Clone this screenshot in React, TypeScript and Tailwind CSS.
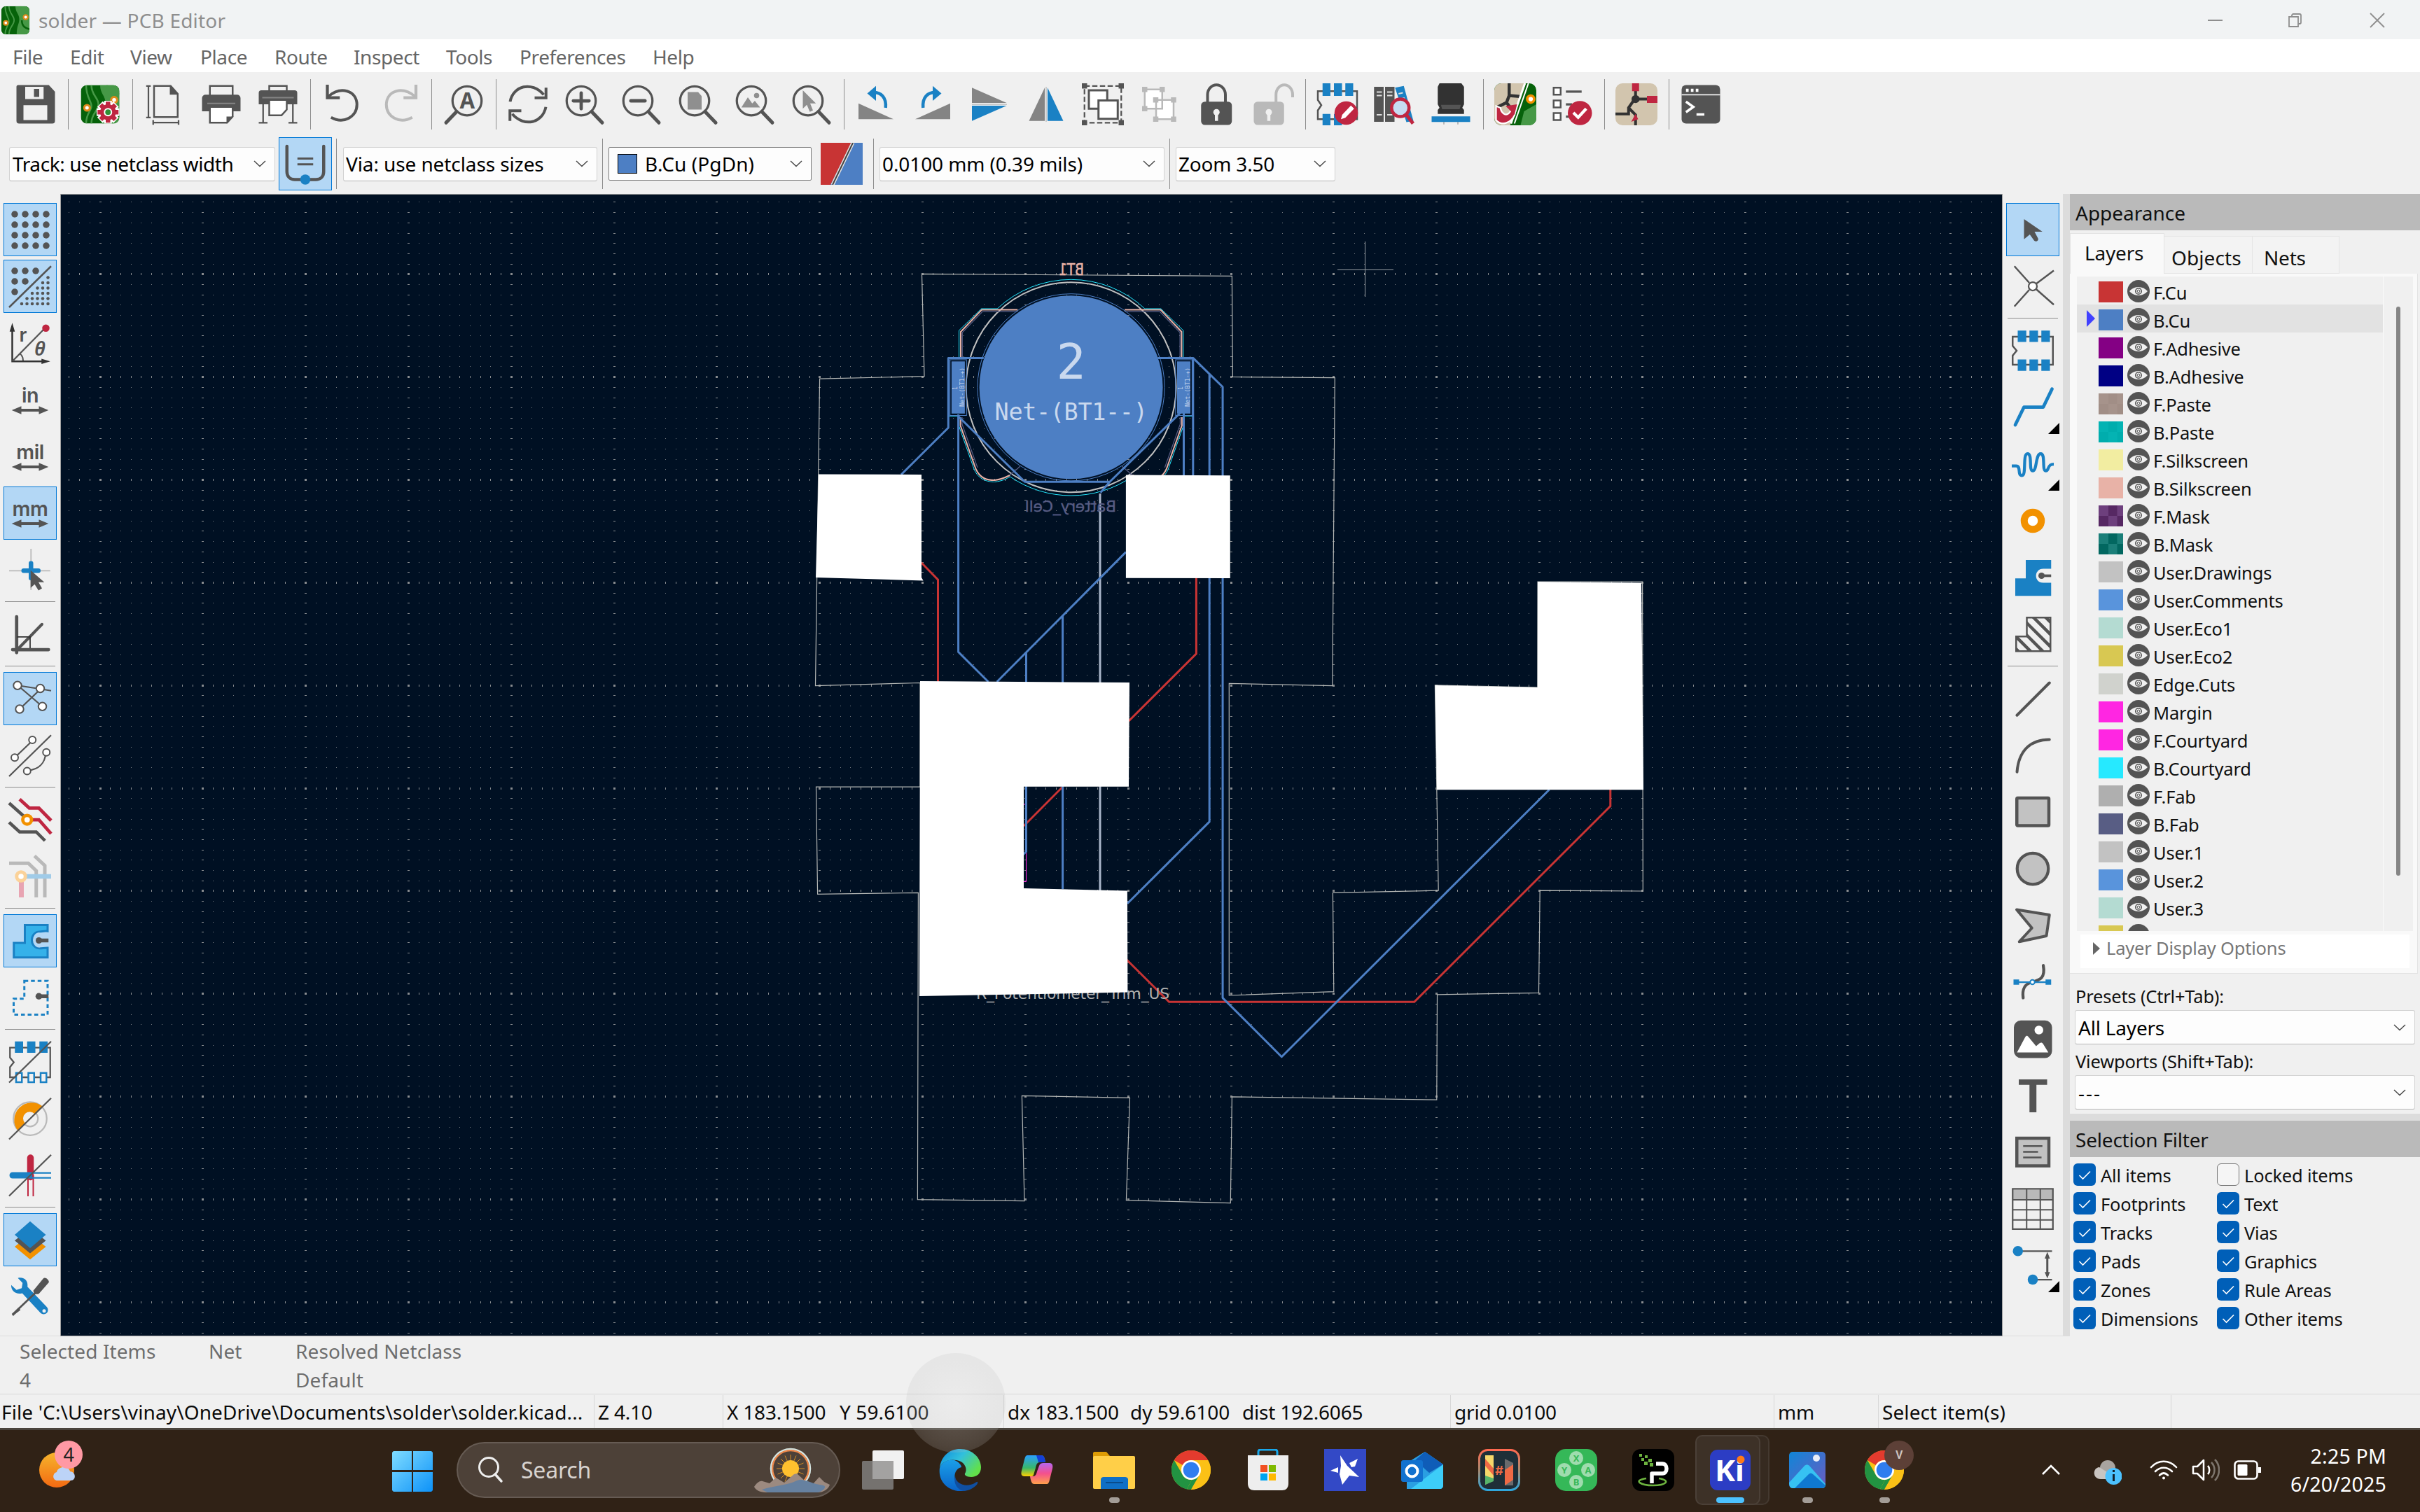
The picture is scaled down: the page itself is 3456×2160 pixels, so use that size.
import React from "react";

type IconProps = { children: React.ReactNode; className?: string };

const Svg = ({ children, className = "size-[60px]" }: IconProps) => (
  <svg viewBox="0 0 24 24" className={`${className} shrink-0 overflow-visible`} fill="none">
    {children}
  </svg>
);

const DK = "#545454";
const BL = "#1a81c4";
const RD = "#bf2641";
const GR = "#848484";
const LT = "#b9b9b9";
const OR = "#f29100";

/* ---------- shared drawings ---------- */

const PcbTile = () => (
  <>
    <clipPath id="tile">
      <rect x="1" y="1" width="22" height="22" rx="3.5" />
    </clipPath>
    <g clipPath="url(#tile)">
      <rect x="1" y="1" width="22" height="22" fill="#06620a" />
      <path d="M12 1c0 5 3 6 3 10s-2 5-2 12h10V1z" fill="#469846" />
      <path d="M7 1c0 6 4 7 4 11s-4 5-4 11M4 1c0 7 3 9 3 12s-3 4-3 10M16 1c0 4 4 5 7 5" stroke="#469846" strokeWidth="1" />
      <path d="M17 12c0 5 3 6 6 7" stroke="#06620a" strokeWidth="1.4" />
      <circle cx="4.500" cy="14" r="1.600" fill="#fff" stroke="#e08a1a" strokeWidth="1.200" />
      <circle cx="20" cy="9.500" r="1.700" fill="#fff" stroke="#e08a1a" strokeWidth="1.200" />
    </g>
  </>
);

const Lens = ({ children }: { children?: React.ReactNode }) => (
  <Svg>
    <circle cx="10" cy="10" r="8.300" stroke={DK} strokeWidth="1.300" />
    <path d="M16 16.200 22 22.500" stroke={DK} strokeWidth="2" strokeLinecap="round" />
    {children}
  </Svg>
);

const Footprint = () => (
  <>
    <path d="M.5 4h23v16H.5v-5.200l2.300-2.800L.5 9.200z" stroke={DK} strokeWidth="1" />
    {[3.4, 10.100, 16.900].map((x) => (
      <g key={x}>
        <rect x={x} y=".5" width="4.900" height="6.500" fill={BL} />
        <rect x={x} y="17" width="4.900" height="6.500" fill={BL} />
      </g>
    ))}
  </>
);

const Arrows = () => <path d="M1.500 18 7 15.700v1.500h10v-1.500L22.500 18 17 20.300v-1.500H7v1.500z" fill={DK} />;

const UnitText = ({ children }: { children: string }) => (
  <text x="12" y="13.400" textAnchor="middle" fontSize="11.500" fontWeight="600" fontFamily="Inter, sans-serif" fill={DK}>
    {children}
  </text>
);

/* ---------- top toolbar ---------- */

const save = (
  <Svg>
    <path d="M2 1h17.500L23 4.800V21.500A1.500 1.500 0 0 1 21.500 23H2.500A1.500 1.500 0 0 1 1 21.500V2a1 1 0 0 1 1-1z" fill={DK} />
    <path d="M6 2h10.500v7H6zM5 12.500h13.600V21H5z" fill="#f0f0f0" />
    <path d="M11 3.200h3v4.600h-3z" fill={DK} />
  </Svg>
);
const pcbSetup = (
  <Svg>
    <PcbTile />
    <g transform="translate(16.500 16.500)">
      <g stroke="#fff" strokeWidth="4.400">
        <path d="M0-6.500V6.500M-6.500 0H6.500M-4.600-4.600 4.600 4.600M-4.600 4.600 4.600-4.600" />
      </g>
      <circle r="5.400" fill="#fff" />
      <g stroke={RD} strokeWidth="2.600">
        <path d="M0-6V6M-6 0H6M-4.200-4.200 4.200 4.200M-4.200 4.200 4.200-4.200" />
      </g>
      <circle r="4.500" fill={RD} />
      <circle r="2" fill="#2f8f35" stroke="#fff" strokeWidth=".8" />
    </g>
  </Svg>
);
const pageIc = (
  <Svg>
    <path d="M6 1.500h9.500L19.500 6v13.300H6z" stroke={DK} />
    <path d="M15 1l5 5.500h-5z" fill={DK} />
    <path d="M2.800 1.500v18M1.500 1.500h2.600M1.500 19.500h2.600M5.500 22.400h14.500M5.500 21v2.700M20 21v2.700" stroke={DK} strokeWidth=".9" />
  </Svg>
);
const printIc = (
  <Svg>
    <path d="M5.500 8V1.500h13V8" stroke={DK} />
    <path d="M3 6.500h18a2 2 0 0 1 2 2V16H1V8.500a2 2 0 0 1 2-2z" fill={DK} />
    <path d="M4 11.500h16" stroke={GR} strokeWidth=".8" />
    <path d="M5.500 13.500h13V19l-3.200 3.500H5.500z" fill="#fff" stroke={DK} />
    <path d="M15 23v-4h4z" fill={DK} />
  </Svg>
);
const plotIc = (
  <Svg>
    <path d="M7 6V1.500h10V6" stroke={DK} />
    <path d="M2.500 4h19A1.500 1.500 0 0 1 23 5.500V12H1V5.500A1.500 1.500 0 0 1 2.500 4z" fill={DK} />
    <path d="M3 8.200h18" stroke={GR} strokeWidth=".8" />
    <path d="M7 9.500h10V15l-3 3.300H7z" fill="#fff" stroke={DK} />
    <path d="M3.500 12v10.500M20.500 12v10.500M1 22.500h5M18 22.500h5" stroke={DK} strokeWidth=".9" />
  </Svg>
);
const undoPath = "M4 7.500C11 1.500 20 4 20.300 12 20.300 19 13 23.500 5.500 19.500";
const undo = (
  <Svg>
    <path d={undoPath} stroke={DK} strokeWidth="1.600" />
    <path d="M3.400.800v7.400H10.500" stroke={DK} strokeWidth="1.700" />
  </Svg>
);
const redo = (
  <Svg>
    <g transform="matrix(-1 0 0 1 25 0)">
      <path d={undoPath} stroke={LT} strokeWidth="1.600" />
      <path d="M3.400.800v7.400H10.500" stroke={LT} strokeWidth="1.700" />
    </g>
  </Svg>
);
const find = (
  <Svg>
    <circle cx="14" cy="10" r="8.300" stroke={DK} strokeWidth="1.300" />
    <path d="M8 16.200 2 22.500" stroke={DK} strokeWidth="2" strokeLinecap="round" />
    <text x="14" y="14.300" textAnchor="middle" fontSize="12.500" fontWeight="700" fontFamily="Noto Sans, sans-serif" fill={DK}>A</text>
  </Svg>
);
const refresh = (
  <Svg>
    <path d="M1.800 10.500C3.500 1.500 14-1.500 21 6.500M22.200 13.500C20.500 22.500 10 25.500 3 17.500" stroke={DK} strokeWidth="1.600" />
    <path d="M22.300 2.500v5.800h-6.500M1.700 21.500v-5.800h6.500" stroke={DK} strokeWidth="1.600" />
  </Svg>
);
const zoomIn = <Lens><path d="M10 5.500v9M5.500 10h9" stroke={DK} strokeWidth="1.900" strokeLinecap="round" /></Lens>;
const zoomOut = <Lens><path d="M6 10h8" stroke={DK} strokeWidth="2" strokeLinecap="round" /></Lens>;
const zoomFit = <Lens><path d="M6 5h6l2 2.300V15H6z" fill="#8f8f8f" /></Lens>;
const zoomObj = (
  <Lens>
    <path d="M4.300 13.800 8 8l2.500 3.500L12 10l3 3.800z" fill="#8f8f8f" />
    <circle cx="13" cy="7" r="1.500" fill="#8f8f8f" />
  </Lens>
);
const zoomSel = <Lens><path d="M7 4v10.500l2.300-2.200 1.700 4 1.800-.8-1.600-4h3.300z" fill="#8f8f8f" /></Lens>;
const rotL = (
  <Svg>
    <path d="M2 12v9h20z" fill={GR} transform="translate(0 -.500)" />
    <path d="M17.500 14C18 8 15 5 10 5.200" stroke={BL} strokeWidth="1.800" />
    <path d="M12 1.500 7 5.800l5 4.200z" fill={BL} />
  </Svg>
);
const rotR = (
  <Svg>
    <path d="M22 12v9H2z" fill={GR} transform="translate(0 -.500)" />
    <path d="M6.500 14C6 8 9 5 14 5.200" stroke={BL} strokeWidth="1.800" />
    <path d="M12 1.500l5 4.300L12 10z" fill={BL} />
  </Svg>
);
const flipV = (
  <Svg>
    <path d="M2 2.500v8.700h19.800z" fill={GR} />
    <path d="M2 21.500v-8.700h19.800z" fill={BL} />
    <path d="M2 12h20" stroke={LT} strokeWidth=".5" />
  </Svg>
);
const flipH = (
  <Svg>
    <path d="M2.200 21.500h9v-19z" fill={GR} />
    <path d="M21.800 21.500h-9v-19z" fill={BL} />
    <path d="M12 2v20" stroke={LT} strokeWidth=".5" />
  </Svg>
);
const group = (
  <Svg>
    <path d="M1.500 1.500h21v21h-21z" stroke={DK} strokeWidth=".9" strokeDasharray="3 1.400" />
    <path d="M0 0h3v3H0zM21 0h3v3h-3zM0 21h3v3H0zM21 21h3v3h-3z" fill={DK} />
    <path d="M4 4h10.500v10.500H4z" fill="#fff" stroke={DK} strokeWidth="1.200" />
    <path d="M9.500 9.800h11v10.500h-11z" fill="#fff" stroke={DK} strokeWidth="1.200" />
  </Svg>
);
const ungroup = (
  <Svg>
    <path d="M3.500 3.500h10v11h-10zM10 9.500h10v11H10z" fill="#fff" stroke={LT} />
    <path d="M2 2h3v3H2zM12 2h3v3h-3zM2 13h3v3H2zM8.300 8h3v3h-3zM18.500 8h3v3h-3zM8.300 19h3v3h-3zM18.500 19h3v3h-3z" fill={LT} />
  </Svg>
);
const lock = (
  <Svg>
    <path d="M7 11V6.500a5 5.500 0 0 1 10.200 0V11" stroke={DK} strokeWidth="1.600" />
    <rect x="3.300" y="10.500" width="17.600" height="13.300" rx="2.200" fill={DK} />
    <circle cx="12.100" cy="16.500" r="1.800" fill="#f0f0f0" />
    <path d="M11.200 16.500h1.800v5h-1.800z" fill="#f0f0f0" />
  </Svg>
);
const unlock = (
  <Svg>
    <path d="M13.700 11V6.500a4.700 5.500 0 0 1 9.500 0V8" stroke={LT} strokeWidth="1.600" />
    <rect x="1" y="10.500" width="17.300" height="13.300" rx="2.200" fill={LT} />
    <circle cx="9.600" cy="16.500" r="1.800" fill="#f0f0f0" />
    <path d="M8.700 16.500h1.800v5H8.700z" fill="#f0f0f0" />
  </Svg>
);
const fpEdit = (
  <Svg>
    <path d="M.8 4.500h22.400v16H.8v-5l2-3-2-3z" stroke={DK} />
    <path d="M3.500 0H8v7.200H3.500zM10 0h4.600v7.200H10zM16.500 0H21v7.200h-4.500zM3.500 17.500H8V24H3.500zM10 17.500h4.600V24H10z" fill={BL} />
    <circle cx="17" cy="17" r="6.700" fill={RD} />
    <path d="m14 20.500.7-2.500 5-5.300 1.800 1.800-5 5.200z" fill="#fff" />
  </Svg>
);
const fpLib = (
  <Svg>
    <path d="M.5 2H6v20H.5zM6.800 2h5.400v20H6.800z" fill={DK} />
    <path d="M2 5h3M2 7h3M8 5h3M8 7h3M2 18h3M8 18h3" stroke="#ddd" strokeWidth=".8" />
    <path d="m12.500 2.500 5-1L23 21.500l-4 .7z" fill={BL} />
    <path d="m14.500 6 2.500-.6M15.500 9l2.500-.6" stroke="#ddd" strokeWidth=".8" />
    <circle cx="15.500" cy="14" r="5" fill="#c7dcf2" stroke={RD} strokeWidth="1.800" />
    <path d="m19 18 3.800 5" stroke={RD} strokeWidth="2" />
  </Svg>
);
const view3d = (
  <Svg>
    <path d="M8 20v3.500M16 20v3.500" stroke={LT} strokeWidth=".8" />
    <path d="M5.500 0h12.500L19.500 2v10l-1 2 1 1.200V17.500H4.500v-2.300L5.500 14l-1-2V2z" fill="#323232" />
    <path d="M6.300 12.300h11.400l-.7 2.500H7z" fill={DK} />
    <path d="M1 18.900h22v3.200H1z" fill={BL} />
  </Svg>
);
const updateSch = (
  <Svg>
    <clipPath id="half">
      <rect x="0" y="0" width="24" height="24" rx="4" />
    </clipPath>
    <g clipPath="url(#half)">
      <rect width="24" height="24" fill="#06620a" />
      <path d="M0 0h18L9 24H0z" fill="#d2c5ae" />
      <path d="M8.500 0v7l-1.500 4M8.500 7l6 .5M7 11l-6 3M7 11l3 4" stroke="#323232" strokeWidth="1.800" />
      <path d="M24 12 17 16l-2 8h9z" fill="#469846" />
      <circle cx="20.800" cy="9" r="2" fill="#fff" stroke={OR} strokeWidth="1.500" />
      <path d="M17.500 0 9.500 23" stroke="#fff" strokeWidth="1.200" />
      <path d="M19.500 0 11.500 23" stroke="#fff" strokeWidth=".8" />
    </g>
    <path d="M1 13v8c3 3.500 8 2 10.500-2.500l1.500-6-3.500 3C7 20 4 17 3.500 14z" fill={RD} stroke="#fff" strokeWidth=".9" />
    <path d="m13 12-6.500 1 5 5z" fill={RD} />
  </Svg>
);
const drc = (
  <Svg>
    <path d="M1.500 2.500h4v4h-4zM1.500 9.800h4v4h-4zM1.500 17h4v4h-4z" stroke={DK} fill="#fff" />
    <path d="M8.500 4.700h9M8.500 12H12M8.500 19h2" stroke={DK} strokeWidth="1.300" />
    <circle cx="16.500" cy="17" r="6.900" fill={RD} />
    <path d="m12.800 16.800 2.700 2.700 4.600-5" stroke="#fff" strokeWidth="1.700" />
  </Svg>
);
const schematic = (
  <Svg>
    <rect x="0" y="0" width="24" height="24" rx="4" fill="#d2c5ae" />
    <path d="M11.500 1v8M11 9h8M11 9l-3.500 5v3.500H0M7.500 14l4 4v6" stroke="#323232" strokeWidth="1.600" />
    <circle cx="11.500" cy="9" r="2.300" fill="#323232" />
    <path d="M9.500 0h4v4.500h-4zM18 7.200h6v4h-6z" fill={RD} />
    <path d="m9 22 4-1.500-1.500-3z" fill={RD} />
  </Svg>
);
const consoleIc = (
  <Svg>
    <rect x="1" y="1" width="22" height="22" rx="2.500" fill={DK} />
    <path d="M1 6.500h22" stroke="#f0f0f0" strokeWidth=".7" />
    <path d="M3.500 4h1.500M6.300 4h1.500M9.100 4h1.500" stroke="#fff" strokeWidth="1.800" />
    <path d="m3.500 10.500 4.200 3-4.200 3M9.500 17.800h4.500" stroke="#fff" strokeWidth="1.400" />
  </Svg>
);

const topTools: (React.ReactNode | "|")[] = [
  save, "|", pcbSetup, "|", pageIc, printIc, plotIc, "|", undo, redo, "|", find, "|",
  refresh, zoomIn, zoomOut, zoomFit, zoomObj, zoomSel, "|",
  rotL, rotR, flipV, flipH, group, ungroup, lock, unlock, "|", fpEdit, fpLib, view3d, "|",
  updateSch, drc, "|", schematic, "|", consoleIc,
];

/* ---------- left toolbar ---------- */

const dots = (list: [number, number][], r: number) =>
  list.map(([x, y]) => <circle key={`${x}-${y}`} cx={x} cy={y} r={r} fill={DK} />);

const grid4: [number, number][] = [3.200, 9.200, 15.200, 21.200].flatMap((y) =>
  [3.200, 9.200, 15.200, 21.200].map((x) => [x, y] as [number, number]));
const gridIc = <Svg>{dots(grid4, 1.900)}</Svg>;
const gridOver = (
  <Svg>
    {dots([[3.200, 3.200], [9.200, 3.200], [15.200, 3.200], [3.200, 9.200], [9.200, 9.200], [3.200, 15.200]], 1.900)}
    {dots(
      [7, 10, 13, 16, 19, 22].flatMap((x, i) =>
        [22, 19, 16, 13, 10, 7].slice(0, i + 1).map((y) => [x + 0.200, y] as [number, number])),
      0.900)}
    <path d="M0 24 24 .5" stroke={DK} strokeWidth="1" />
  </Svg>
);
const polar = (
  <Svg>
    <path d="M1.800 4v18.500H20" stroke="#323232" strokeWidth="1" />
    <path d="m.3 5.500 1.500-5 1.500 5zM18.500 21l5 1.500-5 1.500z" fill="#323232" />
    <path d="M2 22.300 20 4" stroke={DK} strokeWidth=".9" />
    <path d="M6 18c1.500 1 2 2.500 2 4" stroke={DK} strokeWidth=".8" />
    <circle cx="21" cy="3.500" r="2.100" fill={RD} />
    <text x="5.800" y="11" fontSize="11" fontWeight="600" fontFamily="Inter, sans-serif" fill={DK}>r</text>
    <text x="14.500" y="19.200" fontSize="11" fontStyle="italic" fontWeight="600" fontFamily="Noto Sans, sans-serif" fill={DK}>θ</text>
  </Svg>
);
const unit = (t: string) => (
  <Svg>
    <UnitText>{t}</UnitText>
    <Arrows />
  </Svg>
);
const cursorIc = (
  <Svg>
    <path d="M12.500 0v23.500M0 12.500h23.500" stroke={LT} strokeWidth=".7" />
    <path d="M12.500 8.300v8.400M8.300 12.500h8.400" stroke={BL} strokeWidth="2.600" strokeLinecap="round" />
    <path d="M12.300 12.300v10l2.300-2 2.200 3.500 2-1.200-2-3.500h3.300z" fill={DK} />
  </Svg>
);
const angle = (
  <Svg>
    <path d="M4.300 2v20.500M2 20.800h20.500" stroke={DK} strokeWidth="1.900" strokeLinecap="round" />
    <path d="M5 20.500 18.800 6.300" stroke={DK} strokeWidth="1.600" strokeLinecap="round" />
    <path d="M4.500 13.500h7.500V20" stroke="#323232" strokeWidth=".7" />
  </Svg>
);
const ratsnest = (
  <Svg>
    <path d="M5 4.500 18 6.500 24 7.500M5 4.500l14 12M18 6.500 6 18" stroke={DK} strokeWidth=".9" />
    {[[4.800, 4.500], [17.800, 6.200], [6, 18], [19, 16.500]].map(([x, y]) => (
      <circle key={x} cx={x} cy={y} r="2.300" fill="#fff" stroke={DK} strokeWidth=".8" />
    ))}
  </Svg>
);
const curved = (
  <Svg>
    <path d="M3 13.500 13.500 3.500M0 24 24 .5M10.500 20.800C18 20 20.500 16 21 10.500" stroke={DK} strokeWidth=".9" />
    {[[3.200, 13.300], [13.300, 3.200], [21.300, 10.300], [10.300, 21]].map(([x, y]) => (
      <circle key={x} cx={x} cy={y} r="2" fill="#fff" stroke={DK} strokeWidth=".8" />
    ))}
  </Svg>
);
const netHi = (
  <Svg>
    <path d="M6 .3 11.500 5.300H17L24 12.500M10 12h7L24 20" stroke={RD} strokeWidth="1.900" />
    <path d="M0 2.500 9.500 11M0 13.500l6 5.500h9.500l5 5" stroke={DK} strokeWidth="1.800" />
    <circle cx="10.300" cy="12" r="2.500" fill="#fff" stroke={OR} strokeWidth="1.900" />
  </Svg>
);
const contrast = (
  <Svg>
    <path d="M0 4.500h11l4.500 4.300V24M14.500.300l5.900 5.500V24" stroke={LT} strokeWidth="2" />
    <path d="M7 13v11" stroke="#e8a4b2" strokeWidth="2.800" />
    <path d="M8 12h16" stroke="#a0cbe8" strokeWidth="2.600" />
    <circle cx="6.800" cy="12" r="2.500" fill="#fff" stroke="#fbd299" strokeWidth="2" />
  </Svg>
);
const zoneFill = (
  <Svg>
    <path d="M9 3h13v3.500c-2-.3-3 .3-4.500.3-6 0-6 9.500 0 9.500 1.500 0 2.500-.3 4.500-.3V21.500H2.700v-8.300H9z" fill="#35b1e9" stroke={BL} strokeWidth="1.200" />
    <path d="M17 7.300c-4 0-4 8.500 0 8.500 1.500 0 2-1 2.500-2.300H24V10h-4.500C19 8.500 18.500 7.300 17 7.300z" fill="#b3d7f5" />
    <path d="M17 11.800h5.500" stroke={DK} strokeWidth="2.200" />
    <circle cx="17" cy="11.800" r="1.800" fill={DK} />
  </Svg>
);
const zoneOut = (
  <Svg>
    <path d="M8.700 2.500H22v19.300H2.600v-9.100h6.100z" stroke={BL} strokeWidth="1.200" strokeDasharray="2.200 1.600" />
    <path d="M17 11.300h5.500" stroke={DK} strokeWidth="2.200" />
    <circle cx="17" cy="11.300" r="1.900" fill={DK} />
  </Svg>
);
const padsIc = (
  <Svg>
    <path d="M.5 3.800h23v17H.5V15l2.200-2.800L.5 9.500z" stroke={DK} strokeWidth=".9" />
    <path d="M3.300.300H8v6.500H3.300zM10.300.300H15v6.500h-4.700zM17.300.300H22v6.500h-4.700z" fill={BL} />
    <path d="M4 18.300h3.300v5.300H4zM11 18.300h3.300v5.300H11zM18 18.300h3.300v5.300H18z" fill="#f0f0f0" stroke={BL} />
    <path d="M0 23.800 24 .300" stroke={DK} strokeWidth=".9" />
  </Svg>
);
const viasIc = (
  <Svg>
    <circle cx="12" cy="12" r="9.500" stroke={LT} strokeWidth=".9" />
    <circle cx="12" cy="12" r="4.500" stroke={LT} strokeWidth=".9" />
    <path d="M5.300 18.500A9.500 9.500 0 0 1 18.700 5.300L15 9a4.200 4.200 0 0 0-6.400 5.800z" fill={OR} stroke={OR} />
    <path d="M0 23.800 24 .300" stroke={DK} strokeWidth=".9" />
  </Svg>
);
const tracksIc = (
  <Svg>
    <path d="M10.800 12v12M13.800 12v12" stroke={RD} strokeWidth=".8" />
    <path d="M12.200 2v11" stroke={RD} strokeWidth="3.800" strokeLinecap="round" />
    <path d="M12 10.600h12M12 13.400h12" stroke={BL} strokeWidth=".9" />
    <path d="M2 12h9.500" stroke={BL} strokeWidth="3.600" strokeLinecap="round" />
    <path d="M0 23.800 24 .300" stroke={DK} strokeWidth=".9" />
  </Svg>
);
const layersIc = (
  <Svg>
    <path d="m12 9 9 7-9 7.300L3.200 16z" fill={OR} />
    <path d="m12 5.500 9 7-9 7.300-8.800-7.300z" fill={DK} />
    <path d="m12 1.500 9 7.700-9 7.600-8.800-7.600z" fill={BL} />
  </Svg>
);
const toolsIc = (
  <Svg>
    <path d="M5 1.500c3.500-.8 6 1.500 5.500 5l11 11.500a2.300 2.300 0 0 1-3.500 3.500L7.500 10.200C4 11.200 1 8.800 1.200 5.500l3 2.800 3-1 .5-3z" fill={BL} />
    <circle cx="20" cy="20.300" r="1" fill="#f0f0f0" />
    <path d="M14 8.500 19.500 1.800c1-1.200 3.500.800 3.200 2.200L17 10.500c-2 .800-3.500-.500-3-2z" fill={DK} />
    <path d="m15 10-10 9.500-3 3.300" stroke={DK} strokeWidth="1.100" />
    <path d="m5.500 18.300-4 3.700 1 .8 4-3z" fill={DK} />
  </Svg>
);

const leftTools: (
  | { icon: React.ReactNode; on?: boolean; fly?: boolean }
  | "|"
)[] = [
  { icon: gridIc, on: true }, { icon: gridOver, on: true }, { icon: polar }, { icon: unit("in") },
  { icon: unit("mil") }, { icon: unit("mm"), on: true }, { icon: cursorIc }, "|", { icon: angle }, "|",
  { icon: ratsnest, on: true }, { icon: curved }, "|", { icon: netHi }, { icon: contrast }, "|",
  { icon: zoneFill, on: true }, { icon: zoneOut }, "|", { icon: padsIc }, { icon: viasIc },
  { icon: tracksIc }, "|", { icon: layersIc, on: true }, { icon: toolsIc },
];

/* ---------- right toolbar ---------- */

const selectIc = <Svg><path d="M7 6v11.500l3.300-2.700 2.500 3.500c1 1 2.800 0 2.200-1.300l-2-3.800h4.500z" fill={DK} /></Svg>;
const localRats = (
  <Svg>
    <path d="M1.500.500 10 10M24 3 14 10.500M1.500 23.500 10 14M24 22.500 14 13.700" stroke={DK} strokeWidth="1" />
    <circle cx="12" cy="12" r="2.400" fill="#fff" stroke={DK} strokeWidth=".9" />
  </Svg>
);
const routeIc = <Svg><path d="M2 22 7 11.800h11L23 1.500" stroke={BL} strokeWidth="1.900" strokeLinecap="round" strokeLinejoin="round" /></Svg>;
const tuneIc = <Svg><path d="M0 13h2.500c3 0 .5 5.500 3.300 5.500S6 6 9 6s.5 9.800 3 9.800S13.500 6 16.500 6s.5 9.800 3 9.800C21.500 15.800 20 12 24 12" stroke={BL} strokeWidth="1.700" /></Svg>;
const viaIc = <Svg><circle cx="12" cy="12" r="4.900" fill="#fff" stroke={OR} strokeWidth="4" /></Svg>;
const zoneIc = (
  <Svg>
    <path d="M8 2h14.500v5H18c-5.500 0-5.500 8 0 8h4.500v7.500H2V12.500h6z" fill={BL} />
    <path d="M17 11h5.500" stroke={DK} strokeWidth="1.500" />
    <circle cx="17" cy="11" r="1.800" fill={DK} />
  </Svg>
);
const keepout = (
  <Svg>
    <clipPath id="ko"><path d="M8.600 2.500h13.500v19.200H2.500v-8.400h6.100z" /></clipPath>
    <g clipPath="url(#ko)">
      <path d="M-4 14 8 26M0 11l14 14M5 9l16 16M7 4l20 20M10 0l20 20M17 0l12 12" stroke={DK} strokeWidth="1.800" />
    </g>
    <path d="M8.600 2.500h13.500v19.200H2.500v-8.400h6.100z" stroke={DK} strokeWidth="1" />
  </Svg>
);
const lineIc = <Svg><path d="M3 21.500 21.500 3" stroke={DK} strokeWidth="1.600" strokeLinecap="round" /></Svg>;
const arcIc = <Svg><path d="M3 21.500C4 9 11 3 21.500 3" stroke={DK} strokeWidth="1.600" strokeLinecap="round" /></Svg>;
const rectIc = <Svg><rect x="2.900" y="4" width="18.300" height="15.800" rx=".5" fill="#c2c2c2" stroke={DK} strokeWidth="1.800" /></Svg>;
const circIc = <Svg><circle cx="12" cy="12" r="8.900" fill="#c2c2c2" stroke={DK} strokeWidth="1.700" /></Svg>;
const polyIc = <Svg><path d="M2.800 3 21.500 6 19.800 18 4.300 21.300 11.500 13.500z" fill="#c2c2c2" stroke={DK} strokeWidth="1.600" strokeLinejoin="round" /></Svg>;
const bezier = (
  <Svg>
    <path d="M18 2.500c1.500 8-3 8.500-6.500 9.500-5 1.300-5.500 5-5 9" stroke={DK} strokeWidth="1.700" strokeLinecap="round" />
    <path d="M2 12h20" stroke={BL} strokeWidth=".9" />
    <path d="M1 10.500h3.200v3H1zM19.300 10.500h3.200v3h-3.200z" fill={BL} />
    <circle cx="11.800" cy="12" r="1.300" fill="#fff" stroke={BL} strokeWidth=".8" />
  </Svg>
);
const imageIc = (
  <Svg>
    <rect x="1.200" y="1.500" width="21.800" height="21.500" rx="4" fill={DK} />
    <path d="M3 19.800 7.700 11c.6-1 1.200-1 1.900 0l4.300 5.200 2-1.700c.8-.6 1.500-.4 2 .4l3 4.900z" fill="#fff" />
    <circle cx="15.500" cy="7" r="2.500" fill="#fff" />
  </Svg>
);
const textIc = (
  <Svg>
    <text x="12" y="21.700" textAnchor="middle" fontSize="27.500" fontWeight="700" fontFamily="Liberation Sans, sans-serif" fill={DK}>T</text>
  </Svg>
);
const textbox = (
  <Svg>
    <rect x="2.900" y="4" width="18.300" height="15.800" fill="#c2c2c2" stroke={DK} strokeWidth="1.800" />
    <path d="M6.500 8.500h11M6.500 11.800h8.500M6.500 15h10.500" stroke={DK} strokeWidth="1" />
  </Svg>
);
const tableIc = (
  <Svg>
    <path d="M.5 1h23v6H.5z" fill={LT} />
    <path d="M.5.500h23v23H.5z" stroke={DK} strokeWidth=".9" />
    <path d="M.5 6.800h23M.5 12.500h23M.5 18.300h23M8.500.500v23M16.300.500v23" stroke={DK} strokeWidth=".8" />
  </Svg>
);
const dimIc = (
  <Svg>
    <path d="M3 3.700h20M12 20h11" stroke={DK} strokeWidth=".9" />
    <path d="M20.300 6v12" stroke={DK} strokeWidth="1.200" />
    <path d="m18.800 8 1.500-3.800L21.800 8zM18.800 15.700l1.500 3.600 1.500-3.600z" fill={DK} />
    <circle cx="3.500" cy="3.700" r="2.900" fill={BL} />
    <circle cx="12" cy="20" r="2.900" fill={BL} />
  </Svg>
);

const rightTools: typeof leftTools = [
  { icon: selectIc, on: true }, { icon: localRats }, "|",
  { icon: <Svg><Footprint /></Svg> }, { icon: routeIc, fly: true }, { icon: tuneIc, fly: true }, { icon: viaIc },
  { icon: zoneIc }, { icon: keepout }, "|",
  { icon: lineIc }, { icon: arcIc }, { icon: rectIc }, { icon: circIc }, { icon: polyIc }, { icon: bezier },
  { icon: imageIc }, { icon: textIc }, { icon: textbox }, { icon: tableIc }, { icon: dimIc, fly: true },
];

const ToolColumn = ({ items }: { items: typeof leftTools }) => (
  <div className="flex flex-col items-center pt-[10px]">
    {items.map((t, i) =>
      t === "|" ? (
        <div key={i} className="my-[5px] h-px w-[72px] shrink-0 bg-[#8c8c8c]" />
      ) : (
        <div key={i} className="flex h-[81px] shrink-0 items-center">
          <div
            className={
              t.on
                ? "flex size-[76px] items-center justify-center border border-[#0078d7] bg-[#b3d7f5]"
                : "relative flex size-[76px] items-center justify-center"
            }
          >
            {t.icon}
            {t.fly && (
              <svg viewBox="0 0 16 16" className="absolute bottom-0 right-0 size-4">
                <path d="M16 0v16H0z" fill="#000" />
              </svg>
            )}
          </div>
        </div>
      ),
    )}
  </div>
);

/* ---------- combos ---------- */

const Chevron = () => (
  <svg viewBox="0 0 18 10" className="h-[10px] w-[18px] shrink-0" fill="none">
    <path d="m1 1 8 7.500L17 1" stroke="#444" strokeWidth="1.400" />
  </svg>
);

const Combo = ({ text, className }: { text: React.ReactNode; className: string }) => (
  <div className={`flex h-[49px] shrink-0 items-center justify-between rounded-[3px] border border-[#d2d2d2] border-b-[#b5b5b5] bg-[#fdfdfd] text-black ${className}`}>
    {text}
    <Chevron />
  </div>
);

const VSep = ({ className = "" }: { className?: string }) => (
  <div className={`h-[72px] w-px shrink-0 bg-[#8c8c8c] ${className}`} />
);

/* ---------- board canvas ---------- */

const X0 = 87;
const Y0 = 278;
const buildGrid = (major: boolean) => {
  const sx = 14.682;
  const sy = 14.686;
  let d = "";
  for (let j = -8; j < 105; j++) {
    const y = Math.round(391.300 + j * sy);
    if (y < Y0 || y > 1906) continue;
    const mj = j % 10 === 0;
    for (let i = -3; i < 186; i++) {
      const x = Math.round(142.500 + i * sx);
      if (x < X0 + 1 || x > 2857) continue;
      const mi = i % 10 === 0;
      if ((mi || mj) !== major) continue;
      const w = mi ? 3 : 1;
      const h = mj ? 3 : 1;
      d += `M${x - (mi ? 1 : 0)} ${y - (mj ? 1 : 0)}h${w}v${h}h-${w}z`;
    }
  }
  return d;
};
const minorGrid = buildGrid(false);
const majorGrid = buildGrid(true);

const EDGE =
  "M1316.500 391.400 1759.400 394.300 1760.400 538.400 1906.300 539.600 1902.800 979.600 1755.300 976.300V1422L1904.800 1416.700 1903.400 1275.400 2054.200 1272.200 2049.400 978.900 2195.800 982 2196 831H2345.600L2346.300 1273 2199.200 1272.200 2197.500 1418.400 2052.500 1420.800 2051.800 1571.100 1759.400 1566.900 1757.300 1718.600 1608.400 1714.600 1613.500 1568.400 1459.400 1565.400 1463 1715.600 1310.400 1713.600 1311.400 1275.400 1167.600 1277.400 1165.500 1124.200H1314L1314 975.500 1164.500 979.600 1170.600 541.200 1320 537.600Z";

const BCU = [
  "M1404.800 511.400H1354.300V611L1287 678",
  "M1368.600 592V931.400L1411.400 974",
  "M1368.600 594.700 1463.500 688.200H1584.900L1686 589.400M1584.900 688.200 1571.600 703.700",
  "M1653.300 511.400H1703.800L1746.100 552.700V1425.600L1830.300 1509.700 2212.600 1128",
  "M1703.800 511.400V679M1690.500 588V679",
  "M1727.200 534.700V1173.900L1610 1290.800",
  "M1607.900 788.600 1423.700 974",
  "M1465.500 932.200V1216.700L1461 1221",
  "M1517.600 879.600V1270",
];

const SILK_L = "M1453.300 442.600H1402L1372 474V511M1371.600 596V608L1393.600 670C1400 684 1410 686 1420.600 686 1430 685 1436 682 1442 679";
const FAB_L = "M1453.300 445.300H1403L1374.300 475V511M1374 596V606L1396 668M1441 680 1457 666";
const CY_L = "M1424.200 441H1401.500L1369.600 472V511M1354.500 594.300H1367.500M1369.600 600V609L1391 670C1397 685 1410 688.500 1420.600 688.500 1432 687 1437 684 1442.600 681";

const SmallPad = ({ x }: { x: number }) => (
  <g>
    <rect x={x} y="516.300" width="19" height="74.500" fill="#4d7fc4" />
    <rect x={x - 2.200} y="513.900" width="23.600" height="79.600" fill="none" stroke="#4d7fc4" strokeWidth="1" />
    <text transform={`translate(${x + 8} 557) rotate(-90)`} fontSize="8" fill="#c4d3ec" textLength="5">1</text>
    <text transform={`translate(${x + 18} 581) rotate(-90)`} fontSize="8.500" fill="#c4d3ec" textLength="56">Net-(BT1-+)</text>
  </g>
);

const Board = () => (
  <svg viewBox="87 278 2772 1630" className="block h-[1630px] w-[2772px] bg-[#001023]" fontFamily="DejaVu Sans Mono, monospace">
    <path d={minorGrid} fill="#767b80" shapeRendering="crispEdges" />
    <path d={majorGrid} fill="#8a8d90" shapeRendering="crispEdges" />
    <path d={EDGE} fill="none" stroke="#b4b7b5" strokeWidth="1.200" />
    <path d="M1316 804 1339.500 828.200V975M1708.400 825V933.900L1612 1030M1517.600 1124 1462 1180M1609 1371 1669.600 1431.200H2019.800L2299.800 1151.600V1127" fill="none" stroke="#c83434" strokeWidth="3" />
    <path d="M1462 1149h4M1465.500 1216V1259.500H1461" fill="none" stroke="#ff26e2" strokeWidth="1" />
    <path d="M1571 705V1272" stroke="#aab6ca" strokeWidth="3" />
    <circle cx="1529.600" cy="553.300" r="150" fill="none" stroke="#c2c2c2" strokeWidth="2" />
    <g fill="none">
      {["", "matrix(-1 0 0 1 3059.400 0)"].map((t) => (
        <g key={t} transform={t || undefined}>
          <path d={FAB_L} stroke="#585d84" strokeWidth="1.200" />
          <path d={SILK_L} stroke="#e8b2a7" strokeWidth="2" />
          <path d={CY_L} stroke="#26e9ff" strokeWidth="1" />
        </g>
      ))}
      <path d="M1424.200 441A154 154 0 0 1 1634.900 441M1442.600 681A154 154 0 0 0 1616.800 681" stroke="#26e9ff" strokeWidth="1" />
    </g>
    <g fill="none" stroke="#4d7fc4" strokeWidth="3" strokeLinejoin="round">
      {BCU.map((d) => (
        <path key={d} d={d} />
      ))}
    </g>
    <circle cx="1529.600" cy="553.300" r="133.600" fill="none" stroke="#4d7fc4" strokeWidth="1" />
    <circle cx="1529.600" cy="553.300" r="131" fill="#4d7fc4" />
    <SmallPad x={1358.900} />
    <SmallPad x={1681} />
    <text x="1529.600" y="540.500" textAnchor="middle" fontSize="70" fill="#c9d8ee">2</text>
    <text x="1529.600" y="600" textAnchor="middle" fontSize="33.500" fill="#c9d8ee" textLength="218">Net-(BT1--)</text>
    <g fontFamily="DejaVu Sans, sans-serif">
      <text transform="translate(1548 392.500) scale(-1 1)" fontSize="23" fill="#e8b2a7" stroke="#e8b2a7" strokeWidth=".5" textLength="36" lengthAdjust="spacingAndGlyphs">BT1</text>
      <text transform="translate(1594 730.500) scale(-1 1)" fontSize="22" fill="#585d84" stroke="#585d84" strokeWidth=".4" textLength="130" lengthAdjust="spacingAndGlyphs">Battery_Cell</text>
      <text x="1394" y="1426.500" fontSize="22" fill="#afafaf" textLength="276" lengthAdjust="spacingAndGlyphs">R_Potentiometer_Trim_US</text>
    </g>
    <g fill="#fff">
      <path d="M1169 677.500 1316 678V825L1318.600 829.400 1165 825z" />
      <path d="M1607.900 678.400 1756.800 679.200V826.100L1607.900 825.700z" />
      <path d="M1314 973 1613 975 1612 1123.700H1462V1269L1609.900 1272.400 1610.400 1417.600 1313 1423.100z" />
      <path d="M2196 831 2344 832.600 2347 1128.300H2052L2049.400 979 2195.800 982z" />
    </g>
    <path d="M1910 385.500h80M1949.500 345v79" stroke="#9a9fa5" strokeWidth="1" />
  </svg>
);

/* ---------- appearance panel ---------- */

const layers: [string, string, string?][] = [
  ["F.Cu", "#c83434"], ["B.Cu", "#4d7fc4"], ["F.Adhesive", "#840084"], ["B.Adhesive", "#000084"],
  ["F.Paste", "#a6938b", "#a18e86"], ["B.Paste", "#04b3b3", "#00adad"], ["F.Silkscreen", "#f2eda1"],
  ["B.Silkscreen", "#e8b2a7"], ["F.Mask", "#6d3f7d", "#562863"], ["B.Mask", "#1b7f79", "#026760"],
  ["User.Drawings", "#c2c2c2"], ["User.Comments", "#5994dc"], ["User.Eco1", "#b4dbd2"], ["User.Eco2", "#d8c852"],
  ["Edge.Cuts", "#d0d2cd"], ["Margin", "#ff26e2"], ["F.Courtyard", "#ff26e2"], ["B.Courtyard", "#26e9ff"],
  ["F.Fab", "#afafaf"], ["B.Fab", "#585d84"], ["User.1", "#c2c2c2"], ["User.2", "#5994dc"], ["User.3", "#b4dbd2"],
  ["User.4", "#d8c852"],
];

const Eye = () => (
  <svg viewBox="0 0 32 32" className="ml-[6px] mt-[2px] size-8" fill="none">
    <circle cx="16" cy="16" r="16" fill="#545454" />
    <path d="M3 16C10 8 22 8 29 16 22 24 10 24 3 16z" fill="#f0f0f0" />
    <circle cx="16" cy="16" r="4.300" stroke="#545454" strokeWidth="1.500" />
    <circle cx="16" cy="16" r="1.900" stroke="#545454" strokeWidth="1" />
  </svg>
);

const LayerRow = ({ name, color, alt }: { name: string; color: string; alt?: string }) => (
  <div className={name === "B.Cu" ? "flex h-10 shrink-0 items-center bg-[#e2e2e2]" : "flex h-10 shrink-0 items-center"}>
    <div className="flex w-[31px] justify-center pl-2">
      {name === "B.Cu" && (
        <svg viewBox="0 0 12 24" className="h-6 w-3">
          <path d="M0 0 12 12 0 24z" fill="#4040ff" />
        </svg>
      )}
    </div>
    <svg viewBox="0 0 35 30" className="mt-[3px] h-[30px] w-[35px]">
      <rect width="35" height="30" fill={color} />
      {alt && <path d="M14 0h12.500v15H14zM0 15h14v15H0zM26.500 15H35v15h-8.500z" fill={alt} />}
    </svg>
    <Eye />
    <span className="ml-[5px] pt-[5px] text-[25.500px] leading-10">{name}</span>
  </div>
);

const Check = ({ label, on = true }: { label: string; on?: boolean }) => (
  <div className="flex h-[41px] items-center">
    {on ? (
      <svg viewBox="0 0 32 32" className="size-8" fill="none">
        <rect width="32" height="32" rx="6" fill="#005fb8" />
        <path d="m8.500 17 5 5L24 11.500" stroke="#fff" strokeWidth="1.600" />
      </svg>
    ) : (
      <div className="size-8 rounded-[6px] border-[1.500px] border-[#777] bg-[#f5f5f5]" />
    )}
    <span className="ml-[7px] pt-[3px] text-[25.500px] leading-10">{label}</span>
  </div>
);

const Appearance = () => (
  <div className="flex min-w-0 flex-1 flex-col bg-[#f0f0f0]">
    <div className="flex h-[52px] shrink-0 items-center bg-[#bababa] pl-2 pt-[2px] text-[28px] tracking-normal">Appearance</div>
    <div className="mt-1 flex h-[1058px] shrink-0 flex-col">
      <div className="flex h-[58px] shrink-0 items-end text-[28px]">
        <div className="flex h-[58px] w-[135px] items-center border-l border-t border-r border-[#e2e2e2] bg-[#f9f9f9] pb-1 pl-5">Layers</div>
        <div className="flex h-[54px] w-[126px] items-center border border-l-0 border-[#e5e5e5] bg-[#f3f3f3] pl-[10px] pt-2 tracking-[0.1px]">Objects</div>
        <div className="flex h-[54px] w-[124px] items-center border border-l-0 border-[#e5e5e5] bg-[#f3f3f3] pl-4 pt-2">Nets</div>
      </div>
      <div className="mr-[3px] flex flex-1 flex-col border-b border-r border-[#e2e2e2] bg-[#f9f9f9] pl-[10px]">
        <div className="mt-1 flex h-[935px] gap-px overflow-hidden">
          <div className="flex w-[437px] flex-col bg-[#f0f0f0]">
            {layers.map(([n, c, a]) => (
              <LayerRow key={n} name={n} color={c} alt={a} />
            ))}
          </div>
          <div className="h-full w-[42px] bg-[#f0f0f0] pl-[18px] pt-[43px]">
            <div className="h-[813px] w-[6px] rounded-full bg-[#858585]" />
          </div>
        </div>
        <div className="ml-[5px] mt-[5px] flex h-12 w-[470px] items-center bg-white pl-[18px] text-[25.500px] text-[#777]">
          <svg viewBox="0 0 10 18" className="mr-[9px] h-[18px] w-[10px] -translate-y-1">
            <path d="M0 0l10 9L0 18z" fill="#666" />
          </svg>
          <span className="-translate-y-1">Layer Display Options</span>
        </div>
      </div>
    </div>
    <div className="ml-2 mt-[13px] h-[39px] text-[25.500px] leading-[38px]">Presets (Ctrl+Tab):</div>
    <Combo text="All Layers" className="ml-[7px] w-[486px] pl-1 pr-3 text-[28px]" />
    <div className="ml-2 mt-[5px] h-[39px] text-[25.500px] leading-[38px]">Viewports (Shift+Tab):</div>
    <Combo text="---" className="ml-[7px] w-[486px] pl-1 pr-3 text-[28px] tracking-[2px]" />
    <div className="mt-[6px] h-[10px] shrink-0 bg-[#dcdcdc]" />
    <div className="flex h-[52px] shrink-0 items-center bg-[#bababa] pl-2 pt-px text-[28px]">Selection Filter</div>
    <div className="ml-[5px] mt-[4px] grid grid-cols-[205px_1fr]">
      <Check label="All items" />
      <Check label="Locked items" on={false} />
      <Check label="Footprints" />
      <Check label="Text" />
      <Check label="Tracks" />
      <Check label="Vias" />
      <Check label="Pads" />
      <Check label="Graphics" />
      <Check label="Zones" />
      <Check label="Rule Areas" />
      <Check label="Dimensions" />
      <Check label="Other items" />
    </div>
  </div>
);

/* ---------- taskbar ---------- */

const App60 = ({ children }: { children: React.ReactNode }) => (
  <svg viewBox="0 0 60 60" className="size-[60px]" fill="none">
    {children}
  </svg>
);

const Chrome = () => (
  <>
    <circle cx="30" cy="30" r="28" fill="#fbc116" />
    <path d="M30 2a28 28 0 0 1 24.200 14H30a14 14 0 0 0-12.100 7L5.800 16A28 28 0 0 1 30 2z" fill="#e33b2e" />
    <path d="M5.800 16 17.900 37A14 14 0 0 0 31 44l-7 13.500A28 28 0 0 1 5.800 16z" fill="#229342" />
    <path d="M42 37 30 58l-6-.5L31 44z" fill="#229342" />
    <path d="M42.500 36.500 30 58a28 28 0 0 0 24.200-42H30z" fill="#fbc116" />
    <circle cx="30" cy="30" r="14" fill="#fff" />
    <circle cx="30" cy="30" r="11.300" fill="#2f7def" />
  </>
);

const taskIcons: { icon: React.ReactNode; dot?: boolean; active?: boolean }[] = [
  { icon: <App60><rect x="15" y="2" width="45" height="41" rx="2" fill="#f1f1f1" /><rect x="0" y="17" width="45" height="41" rx="2" fill="#7d7b79" opacity=".9" /><path d="M15 17h30v26H15z" fill="#a3a2a1" /></App60> },
  {
    icon: (
      <App60>
        <defs>
          <linearGradient id="e1" x1="0" y1="0" x2="1" y2="0.600"><stop offset="0" stopColor="#0b8ae0" /><stop offset=".5" stopColor="#32c0dc" /><stop offset="1" stopColor="#62e04a" /></linearGradient>
          <linearGradient id="e2" x1="0" y1="0" x2="0" y2="1"><stop offset="0" stopColor="#1a9fe8" /><stop offset="1" stopColor="#0a63c8" /></linearGradient>
        </defs>
        <path d="M1 27C3 10 15 0 30 0c18 0 30 13 30 26 0 9-6 14-14 14-7 0-10-3-9-5 4-5 1-17-12-19C14 14 5 18 1 27z" fill="url(#e1)" />
        <path d="M1 27c4-9 13-13 21-11 8 3 10 8 10 10-8 2-11 10-9 18 2 9 9 14 15 16C18 63-2 50 1 27z" fill="url(#e2)" />
        <path d="M23 38c0 10 12 16 22 13 6-1 9-5 10-4 2 3-8 12-19 13-9-1-16-10-13-22z" fill="#104fa0" />
      </App60>
    ),
  },
  {
    icon: (
      <App60>
        <defs>
          <linearGradient id="c1" x1="0" y1="0" x2="0" y2="1"><stop offset="0" stopColor="#2aa0ff" /><stop offset=".6" stopColor="#38b86a" /><stop offset="1" stopColor="#ffd000" /></linearGradient>
          <linearGradient id="c2" x1="0" y1="0" x2="0" y2="1"><stop offset="0" stopColor="#b566f0" /><stop offset=".5" stopColor="#f4508c" /><stop offset="1" stopColor="#ffa14c" /></linearGradient>
        </defs>
        <path d="M16 9h20c4 0 5 4 6 10h-8c-4 0-5 3-6 8l-3 10c-1 2-2 2-4 2h-9c-5 0-5-4-4-8l4-16c1-4 2-6 4-6z" fill="url(#c1)" />
        <path d="M29 9h7c4 0 5 4 6 10h-10z" fill="#1440d8" />
        <path d="M44 50H26c-4 0-5-5-6-11h4c4 0 5-3 6-7l3-8c1-3 3-4 6-4h9c4 0 5 4 4 8l-4 16c-1 4-2 6-4 6z" fill="url(#c2)" />
      </App60>
    ),
  },
  {
    icon: (
      <App60>
        <path d="M0 6c0-1 1-2 2-2h17l5 6v8H0z" fill="#dd9c05" />
        <rect x="0" y="10" width="60" height="47" rx="2" fill="#ffcf48" />
        <path d="M11 57V44c0-3 2-4 4-4h30c3 0 5 1 5 4v13z" fill="#0f6fc6" />
        <path d="M18 48h25" stroke="#0a4b8a" strokeWidth="2" />
      </App60>
    ),
    dot: true,
  },
  { icon: <App60><Chrome /></App60> },
  {
    icon: (
      <App60>
        <path d="M16 14V4c0-2 1-3 3-3h21c2 0 3 1 3 3v10" stroke="#19a7ea" strokeWidth="3" />
        <path d="M1 9h58v40c0 7-4 10-9 10H10c-5 0-9-3-9-10z" fill="#eee" />
        <path d="M19 23h10v10H19z" fill="#f25022" /><path d="M31 23h10v10H31z" fill="#7fba00" />
        <path d="M19 35h10v10H19z" fill="#00a4ef" /><path d="M31 35h10v10H31z" fill="#ffb900" />
      </App60>
    ),
  },
  { icon: <App60><path d="M0 0h60v60H0z" fill="#3349c6" /><path d="M23 9 33 24 50 40 36 38 26 51 22 36 24 24z" fill="#fff" /><path d="m36 20 12-6-4 11-5 1zM9 31l11-5v8z" fill="#fff" /></App60> },
  {
    icon: (
      <App60>
        <path d="M8 20 34 4l26 18v30c0 3-2 5-5 5H8z" fill="#2a9fe2" />
        <path d="M34 4 60 22 40 34 20 16z" fill="#0f5db8" />
        <path d="M60 22v30c0 3-2 5-5 5H14z" fill="#3dcdf8" />
        <rect x="0" y="16" width="31" height="31" rx="3" fill="#1272cf" />
        <circle cx="15.500" cy="31.500" r="8" stroke="#fff" strokeWidth="4" />
      </App60>
    ),
  },
  {
    icon: (
      <App60>
        <defs><linearGradient id="h1" x1="0" y1="0" x2="0" y2="1"><stop offset="0" stopColor="#ff6a50" /><stop offset=".5" stopColor="#a88a70" /><stop offset="1" stopColor="#2fa7dc" /></linearGradient></defs>
        <rect x="1.500" y="1.500" width="57" height="57" rx="12" fill="#1f2f38" stroke="url(#h1)" strokeWidth="3" />
        <path d="M10 9l12 0v36l-12 6z" fill="#f5d76a" /><path d="M10 14l12 14v10L10 24z" fill="#ef6a45" /><path d="M10 38l12 4v4l-12 5z" fill="#58b56a" />
        <path d="M38 14l12 6v32H38z" fill="#6a6a6c" /><path d="M38 30l12-8v22l-12 8z" fill="#ef6a45" />
        <text x="30" y="37" textAnchor="middle" fontSize="18" fontWeight="700" fontFamily="Inter, sans-serif" fill="#ef6a45">#</text>
      </App60>
    ),
  },
  {
    icon: (
      <App60>
        <rect width="60" height="60" rx="15" fill="#35b858" />
        {([["X", 30, 13], ["Y", 13, 30], ["A", 47, 30], ["B", 30, 47]] as [string, number, number][]).map(([t, x, y]) => (
          <g key={t}>
            <circle cx={x} cy={y} r="10" fill="#9fdcae" />
            <text x={x} y={y + 5} textAnchor="middle" fontSize="13" fontWeight="700" fontFamily="Noto Sans, sans-serif" fill="#35b858">{t}</text>
          </g>
        ))}
      </App60>
    ),
  },
  {
    icon: (
      <App60>
        <rect width="60" height="60" rx="12" fill="#000" />
        <path d="M10 7h4v4h-4zM18 9h4v4h-4zM13 13h4v4h-4zM23 14h5v5h-5zM17 18h5v5h-5zM25 20h5v5h-5z" fill="#6db33f" />
        <path d="M34 21h9c8 0 8 14 0 14H28v14" stroke="#fff" strokeWidth="5.500" strokeLinejoin="round" />
        <path d="M20 42c-20 3-8 10 10 10s26-7 8-10" stroke="#6db33f" strokeWidth="2.600" />
      </App60>
    ),
  },
  {
    icon: (
      <App60>
        <rect x="1" y="1" width="58" height="58" rx="11" fill="#2c3dc4" />
        <text x="29" y="46" textAnchor="middle" fontSize="42" fontWeight="700" fontFamily="Open Sans, sans-serif" fill="#fff" textLength="42" lengthAdjust="spacingAndGlyphs">Ki</text>
        <circle cx="45" cy="15" r="5.500" fill="#ff7a18" />
      </App60>
    ),
    dot: true,
    active: true,
  },
  {
    icon: (
      <App60>
        <defs><linearGradient id="p1" x1="0" y1="0" x2="1" y2="1"><stop offset="0" stopColor="#0f86d8" /><stop offset="1" stopColor="#6d5bc0" /></linearGradient></defs>
        <rect x="4" y="4" width="52" height="52" rx="5" fill="url(#p1)" />
        <path d="M4 48 26 24c2-2 5-2 7 0l23 26c0 4-2 6-5 6H9c-3 0-5-3-5-8z" fill="#36c2f2" />
        <path d="m12 56 20-20c2-2 4-2 6 0l18 16c-1 3-3 4-5 4z" fill="#0f78d0" />
        <circle cx="43" cy="13" r="5" fill="#e9eef8" />
      </App60>
    ),
    dot: true,
  },
  {
    icon: (
      <svg viewBox="0 0 60 60" className="size-[60px] overflow-visible" fill="none">
        <Chrome />
        <circle cx="51" cy="9" r="21" fill="#5d4037" />
        <text x="51" y="14" textAnchor="middle" fontSize="16" fontWeight="600" fontFamily="Roboto, sans-serif" fill="#cfc6c2">V</text>
      </svg>
    ),
    dot: true,
  },
];

const Taskbar = () => (
  <div className="flex h-[120px] shrink-0 items-center border-t-[3px] border-[#4a443c] bg-[#302216]">
    <svg viewBox="0 0 72 76" className="-mt-3 ml-[50px] h-[76px] w-[72px]" fill="none">
      <defs><linearGradient id="sun" x1="0" y1="0" x2="0" y2="1"><stop offset="0" stopColor="#f6b52c" /><stop offset="1" stopColor="#f36a12" /></linearGradient></defs>
      <circle cx="31" cy="42" r="25" fill="url(#sun)" />
      <path d="M32 57c-7 0-8-10-1-12 2-9 17-9 19-1 9 1 9 13 1 13z" fill="#bcd3f7" />
      <circle cx="48" cy="20" r="20" fill="#ff99a4" />
      <text x="48" y="30" textAnchor="middle" fontSize="27" fontFamily="Noto Sans, sans-serif" fill="#222">4</text>
    </svg>
    <svg viewBox="0 0 58 58" className="ml-[438px] h-[58px] w-[58px]">
      <defs><linearGradient id="win" x1="0" y1="0" x2="1" y2="1"><stop offset="0" stopColor="#7fdcff" /><stop offset="1" stopColor="#0d92f8" /></linearGradient></defs>
      <path d="M2 0h26v27H0V2zM30 0h26l2 2v25H30zM0 30h28v28H2l-2-2zM30 30h28v26l-2 2H30z" fill="url(#win)" />
    </svg>
    <div className="ml-[34px] mt-[-3px] flex h-20 w-[548px] items-center rounded-full border-2 border-[#665b53] bg-[#4d4138] pl-[27px] text-[32px] text-[#d8d3cf]">
      <svg viewBox="0 0 38 38" className="h-[38px] w-[38px]" fill="none">
        <circle cx="17" cy="15" r="13.500" stroke="#eee" strokeWidth="3" />
        <path d="m26 25 9 10" stroke="#eee" strokeWidth="3.500" strokeLinecap="round" />
      </svg>
      <span className="ml-[25px]">Search</span>
      <svg viewBox="0 0 110 64" className="ml-auto mr-[12px] h-16 w-[110px]" fill="none">
        <circle cx="53" cy="30" r="28" stroke="#d5e4e0" strokeWidth="2.500" />
        <circle cx="53" cy="30" r="25.800" stroke="#f0894a" strokeWidth="2.200" />
        <path d="M53 10v40M33 30h40M39 16l28 28M39 44l28-28M45 11.500l16 37M34.500 22l37 16M61 11.500l-16 37M34.500 38l37-16" stroke="#d88f22" strokeWidth="1" />
        <circle cx="53" cy="30" r="12" fill="#ffc12e" />
        <path d="M1 56c4-6 8-9 12-8l10 3 9-8 12 7 14-12 4-1 12 11 10 5 10-11 7 7 8 4c-2 6-8 11-18 11H18C8 64 3 60 1 56z" fill="#9c8a80" />
        <path d="M12 60c18-6 36-6 48-12s20 4 40 6c6 2-2 10-10 10H20z" fill="#6681a0" />
      </svg>
    </div>
    <div className="ml-[6px] flex h-full">
      {taskIcons.map((t, i) => (
        <div key={i} className="relative flex h-full w-[110px] shrink-0 items-center justify-center pb-[3px]">
          {t.active && (
            <>
              <div className="absolute left-[22px] top-[7px] h-[100px] w-[89px] rounded-[10px] border-2 border-[#443930] bg-[#362a20]" />
              <div className="absolute left-[5px] top-[7px] h-[100px] w-[93px] rounded-[10px] border-2 border-[#4b4037] bg-[#3d3127]" />
            </>
          )}
          <div className="relative flex">{t.icon}</div>
          {t.dot && (
            <div
              className={
                t.active
                  ? "absolute bottom-[13px] h-2 w-10 rounded-full bg-[#4cc2ff]"
                  : "absolute bottom-[13px] h-2 w-[15px] rounded-full bg-[#a39d97]"
              }
            />
          )}
        </div>
      ))}
    </div>
    <div className="ml-auto mr-[48px] mt-[-3px] flex items-center text-white">
      <svg viewBox="0 0 28 16" className="mr-[47px] h-4 w-7" fill="none"><path d="m2 14 12-12 12 12" stroke="#fff" strokeWidth="2.600" /></svg>
      <svg viewBox="0 0 40 36" className="mr-[40px] mt-[6px] h-9 w-10" fill="none">
        <circle cx="20" cy="12" r="11" fill="#a9a49f" />
        <path d="M10 28C-2 28-2 12 8 11l16 10v7z" fill="#c9c5c1" />
        <circle cx="28.500" cy="24" r="12" fill="#4cc2ff" />
        <path d="M28.500 21v10M28.500 15v3" stroke="#12222e" strokeWidth="3" />
      </svg>
      <svg viewBox="0 0 40 30" className="mr-[20px] h-[30px] w-10" fill="none" stroke="#fff" strokeWidth="2.600" strokeLinecap="round">
        <path d="M2 11c10-11 26-11 36 0M8 17c7-7 17-7 24 0M14 22.500c4-4 8-4 12 0" />
        <circle cx="20" cy="26.500" r="2" fill="#fff" stroke="none" />
      </svg>
      <svg viewBox="0 0 40 34" className="mr-[20px] h-[34px] w-10" fill="none" stroke="#fff" strokeWidth="2.500" strokeLinejoin="round">
        <path d="M2 12h6l9-9v28l-9-9H2z" />
        <path d="M23 11c3 3 3 9 0 12" />
        <path d="M28 6c6 6 6 16 0 22M33 2c8 8 8 22 0 30" stroke="#7d756d" />
      </svg>
      <svg viewBox="0 0 40 28" className="mr-[41px] h-7 w-10" fill="none">
        <rect x="1.500" y="1.500" width="32" height="25" rx="5" stroke="#fff" strokeWidth="2.600" />
        <rect x="5.500" y="6" width="14" height="16" rx="1.500" fill="#fff" />
        <path d="M37 10v8" stroke="#fff" strokeWidth="4" />
      </svg>
      <div className="text-right text-[28.500px] leading-10 tracking-[0.2px]">
        <div>2:25 PM</div>
        <div>6/20/2025</div>
      </div>
    </div>
  </div>
);

/* ---------- window ---------- */

export default function App() {
  return (
    <div className="relative flex h-[2160px] w-[3456px] flex-col overflow-hidden whitespace-pre bg-[#f0f0f0] font-['Noto_Sans',sans-serif] text-[28px] leading-none tracking-[-0.2px] text-[#111]">
      <div className="flex h-14 shrink-0 items-center bg-[#f1f3f4] pt-px text-[#8e8e8e]">
        <Svg className="size-[44px]"><PcbTile /></Svg>
        <span className="ml-[11px] pt-px tracking-[0.2px]">solder — PCB Editor</span>
        <svg viewBox="0 0 260 24" className="ml-auto mr-[49px] h-6 w-[260px]" fill="none" stroke="#8e8e8e" strokeWidth="1.800">
          <path d="M6 12h21M238 2l20 20M258 2l-20 20" />
          <path d="M122 7h13v14h-13zM126 7V5c0-1 1-2 2-2h9c1 0 2 1 2 2v10c0 1-1 2-2 2h-2" />
        </svg>
      </div>
      <div className="flex h-[47px] shrink-0 items-center bg-white pl-[18px] pt-[3px] tracking-[-0.4px] text-[#666]">
        <span className="w-[82px]">File</span>
        <span className="w-[86px]">Edit</span>
        <span className="w-[100px]">View</span>
        <span className="w-[106px]">Place</span>
        <span className="w-[113px]">Route</span>
        <span className="w-[132px]">Inspect</span>
        <span className="w-[105px]">Tools</span>
        <span className="w-[190px]">Preferences</span>
        <span>Help</span>
      </div>
      <div className="flex h-[91px] shrink-0 items-center pl-[10.500px]">
        {topTools.map((t, i) =>
          t === "|" ? (
            <VSep key={i} className="mx-[5px]" />
          ) : (
            <div key={i} className="flex w-[81px] shrink-0 justify-center">{t}</div>
          ),
        )}
      </div>
      <div className="flex h-[83px] shrink-0 items-center pb-[3px]">
        <Combo text="Track: use netclass width" className="ml-[13px] w-[380px] pl-1 pr-3 tracking-[-0.4px]" />
        <div className="ml-[5px] flex size-[76px] shrink-0 items-center justify-center border border-[#0078d7] bg-[#b3d7f5]">
          <Svg>
            <path d="M1.500 2v14.500c0 3 2 4.500 4.500 4.500h12c2.500 0 4.500-1.500 4.500-4.500V2" stroke={DK} strokeWidth="1.800" strokeLinecap="round" />
            <path d="M7.500 9h9M7.500 12.300h9" stroke={DK} strokeWidth="1.200" />
            <circle cx="12" cy="21" r="2.900" fill={BL} />
          </Svg>
        </div>
        <VSep className="ml-[6px]" />
        <Combo text="Via: use netclass sizes" className="ml-[9px] w-[363px] pl-[3px] pr-3 tracking-[-0.100px]" />
        <VSep className="ml-[7px]" />
        <div className="ml-[8px] flex h-[48px] w-[290px] shrink-0 items-center rounded-[2px] border border-[#7a7a7a] bg-[#fdfdfd] pl-3 pr-3 text-black">
          <div className="size-7 border border-black bg-[#4d7fc4]" />
          <span className="ml-[11px] mr-auto tracking-[0.100px]">B.Cu (PgDn)</span>
          <Chevron />
        </div>
        <svg viewBox="0 0 60 60" className="ml-[13px] size-[60px] shrink-0">
          <path d="M0 0h60v60H0z" fill="#4d7fc4" />
          <path d="M0 0h44L14 60H0z" fill="#c83434" />
          <path d="M46 0 17 60" stroke="#e4e4e4" strokeWidth="5" />
          <path d="M46 0 17 60" stroke="#444" strokeWidth="2" />
        </svg>
        <VSep className="ml-[15px]" />
        <Combo text="0.0100 mm (0.39 mils)" className="ml-[8px] w-[407px] pl-[3px] pr-3 tracking-[-0.100px]" />
        <VSep className="ml-[7px]" />
        <Combo text="Zoom 3.50" className="ml-[8px] w-[228px] pl-[3px] pr-3" />
      </div>

      <div className="flex h-[1632px] shrink-0">
        <div className="w-[86px] shrink-0 border-b border-[#dcdcdc]">
          <ToolColumn items={leftTools} />
        </div>
        <div className="shrink-0 border border-[#a0a0a0]">
          <Board />
        </div>
        <div className="w-[86px] shrink-0 border-b border-[#dcdcdc]">
          <ToolColumn items={rightTools} />
        </div>
        <div className="w-[10px] shrink-0 bg-[#dcdcdc]" />
        <Appearance />
      </div>

      <div className="flex h-[82px] shrink-0 pl-[28px] pt-px leading-[41px] tracking-[0.100px] text-[#6d6d6d]">
        <div className="w-[270px]">
          <div>Selected Items</div>
          <div>4</div>
        </div>
        <div className="w-[124px]">Net</div>
        <div>
          <div>Resolved Netclass</div>
          <div>Default</div>
        </div>
      </div>
      <div className="flex h-[49px] shrink-0 items-stretch border-t border-[#d7d7d7] pt-px leading-[49px] text-[#0a0a0a]">
        <div className="w-[849px] shrink-0 border-r border-[#d7d7d7] pl-[2px] tracking-[0.120px]">File 'C:\Users\vinay\OneDrive\Documents\solder\solder.kicad...</div>
        <div className="w-[184px] border-r border-[#d7d7d7] pl-[5px]">Z 4.10</div>
        <div className="flex w-[401px] border-r border-[#d7d7d7] pl-[5px]">
          <span className="w-[161px]">X 183.1500</span>
          <span className="tracking-[0.100px]">Y 59.6100</span>
        </div>
        <div className="flex w-[638px] border-r border-[#d7d7d7] pl-[5px]">
          <span className="w-[175px] tracking-normal">dx 183.1500</span>
          <span className="w-[160px] tracking-normal">dy 59.6100</span>
          <span>dist 192.6065</span>
        </div>
        <div className="w-[462px] border-r border-[#d7d7d7] pl-[5px]">grid 0.0100</div>
        <div className="w-[149px] border-r border-[#d7d7d7] pl-[5px]">mm</div>
        <div className="w-[418px] border-r border-[#d7d7d7] pl-[5px] tracking-[0.100px]">Select item(s)</div>
      </div>
      <Taskbar />
      <div className="absolute left-[1294px] top-[1933px] size-[142px] rounded-full bg-[radial-gradient(circle,rgba(225,225,225,0.3)_0%,rgba(195,195,195,0.22)_60%,rgba(150,150,150,0.12)_100%)]" />
    </div>
  );
}
